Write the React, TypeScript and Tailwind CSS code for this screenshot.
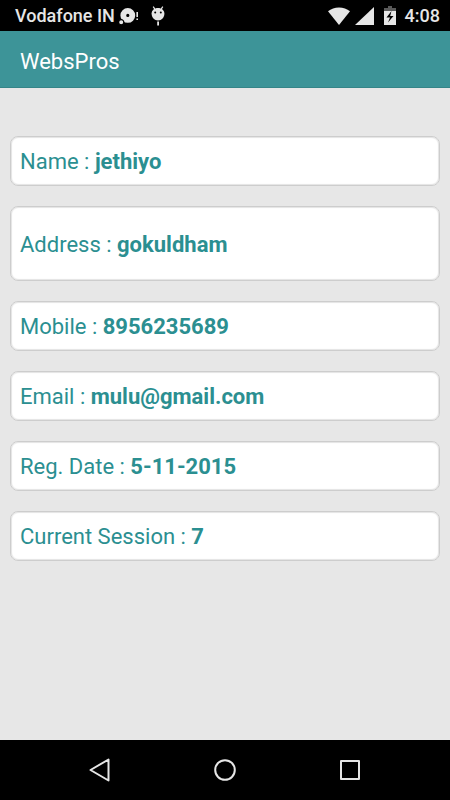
interface Field {
  label: string
  value: string
  tall?: boolean
}

const fields: Field[] = [
  { label: 'Name', value: 'jethiyo' },
  { label: 'Address', value: 'gokuldham', tall: true },
  { label: 'Mobile', value: '8956235689' },
  { label: 'Email', value: 'mulu@gmail.com' },
  { label: 'Reg. Date', value: '5-11-2015' },
  { label: 'Current Session', value: '7' }
]

function DiscIcon() {
  return (
    <svg width="22" height="18" viewBox="0 0 22 18" fill="#e6e6e6" aria-hidden="true">
      <path fillRule="evenodd" d="M8.8 1a7.4 7.4 0 1 1 0 14.8A7.4 7.4 0 0 1 8.8 1zm0 5.8a1.6 1.6 0 1 0 0 3.200 1.6 1.6 0 0 0 0-3.200z" />
      <circle cx="2.200" cy="15.200" r="2.600" stroke="#000" strokeWidth="1.200" />
      <path d="M17.400 5H19v5h-1.600zM17.400 11.400H19V13h-1.600z" />
    </svg>
  )
}

function DroidIcon() {
  return (
    <svg width="14" height="20" viewBox="0 0 14 20" fill="#e6e6e6" aria-hidden="true">
      <path d="M2.2.6l2 3M11.8.6l-2 3" stroke="#e6e6e6" strokeWidth="1.2" />
      <path d="M.6 7.6C.6 4.4 3.4 2 7 2s6.400 2.400 6.400 5.600C13.400 11.600 10.600 14.600 7 14.600S.6 11.600.6 7.600z" />
      <circle cx="4.2" cy="6.6" r="1" fill="#000" />
      <circle cx="9.800" cy="6.6" r="1" fill="#000" />
      <path d="M6.200 15.500h1.800v4H6.200z" />
    </svg>
  )
}

function StatusBar() {
  return (
    <div className="flex h-[31px] items-center justify-between bg-black pl-[15px] pr-[10px] text-[#e6e6e6]">
      <div className="flex items-center">
        <span className="text-[18px] font-medium leading-5">Vodafone IN</span>
        <span className="ml-1"><DiscIcon /></span>
        <span className="ml-[10px]"><DroidIcon /></span>
      </div>
      <div className="flex items-center">
        <svg width="22" height="18" viewBox="0 0 22 18" fill="#e6e6e6" aria-hidden="true">
          <path d="M11 18L0 4.200C3 1.800 6.800.4 11 .4s8 1.400 11 3.800z" />
        </svg>
        <svg className="ml-[5px]" width="19" height="18" viewBox="0 0 19 18" fill="#e6e6e6" aria-hidden="true">
          <path d="M19 0v18H0z" />
        </svg>
        <svg className="ml-[10px]" width="12" height="19" viewBox="0 0 12 19" aria-hidden="true">
          <path d="M4 0h4v2h4v3H0V2h4z" fill="#595959" />
          <path d="M0 5h12v14H0z" fill="#e6e6e6" />
          <path d="M7.500 5L2.500 11.500H6l-2 5 5.500-6.500H6.200z" fill="#000" />
        </svg>
        <span className="ml-[9px] text-[18px] font-medium leading-5">4:08</span>
      </div>
    </div>
  )
}

function NavBar() {
  return (
    <nav className="flex h-[60px] bg-black px-[37px]">
      <button type="button" aria-label="Back" className="flex flex-1 items-center justify-center">
        <svg width="24" height="24" viewBox="0 0 24 24" fill="none" stroke="#e6e6e6" strokeWidth="2" strokeLinejoin="round">
          <path d="M2.500 12L20.500 1.500v21z" />
        </svg>
      </button>
      <button type="button" aria-label="Home" className="flex flex-1 items-center justify-center">
        <svg width="24" height="24" viewBox="0 0 24 24" fill="none" stroke="#e6e6e6" strokeWidth="2">
          <circle cx="12" cy="12" r="9.800" />
        </svg>
      </button>
      <button type="button" aria-label="Recent apps" className="flex flex-1 items-center justify-center">
        <svg width="24" height="24" viewBox="0 0 24 24" fill="none" stroke="#e6e6e6" strokeWidth="2" strokeLinejoin="round">
          <path d="M3 3h18v18H3z" />
        </svg>
      </button>
    </nav>
  )
}

export default function App() {
  return (
    <div className="flex min-h-screen flex-col bg-[#e7e7e7] font-['Roboto',sans-serif]">
      <StatusBar />

      {/* App bar */}
      <header className="flex h-[57px] items-center border-b border-[#358588] bg-[#3d9498] px-5 pt-[5px]">
        <h1 className="text-[22px] leading-7 text-white">WebsPros</h1>
      </header>

      {/* Profile details */}
      <main className="flex flex-1 flex-col gap-5 px-[10px] pt-12">
        {fields.map((field) => (
          <div
            key={field.label}
            className={`flex items-center rounded-lg border border-[#cdcdcd] bg-white px-[9px] pt-[2px] text-[22px] leading-7 text-[#2b8f91] shadow-[inset_0_0_1px_1px_#e4e4e4] ${
              field.tall ? 'h-[75px]' : 'h-[50px]'
            }`}
          >
            <p>
              {field.label} : <strong className="font-bold">{field.value}</strong>
            </p>
          </div>
        ))}
      </main>

      <NavBar />
    </div>
  )
}
